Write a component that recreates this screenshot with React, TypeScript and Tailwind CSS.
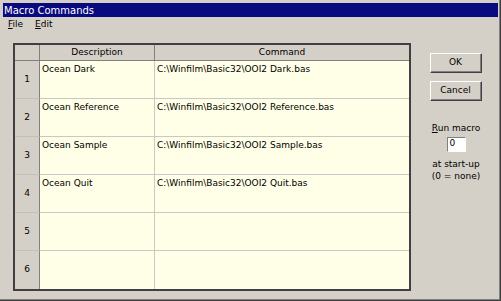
import React from 'react';

const ROWS = [
  { desc: 'Ocean Dark', cmd: 'C:\\Winfilm\\Basic32\\OOI2 Dark.bas' },
  { desc: 'Ocean Reference', cmd: 'C:\\Winfilm\\Basic32\\OOI2 Reference.bas' },
  { desc: 'Ocean Sample', cmd: 'C:\\Winfilm\\Basic32\\OOI2 Sample.bas' },
  { desc: 'Ocean Quit', cmd: 'C:\\Winfilm\\Basic32\\OOI2 Quit.bas' },
  { desc: '', cmd: '' },
  { desc: '', cmd: '' },
];

function Button({ children }: { children: React.ReactNode }) {
  return (
    <div className="border border-t-white border-l-white border-r-[#404040] border-b-[#404040]">
      <div className="flex h-[18px] w-[50px] items-center justify-center border-r border-b border-[#808080] bg-[#d4d0c8]">
        {children}
      </div>
    </div>
  );
}

export default function App() {
  return (
    <div
      className="h-[301px] w-[501px] overflow-hidden border-r border-b border-[#404040] bg-[#d4d0c8] text-[9px] text-black"
      style={{ fontFamily: '"DejaVu Sans", Verdana, sans-serif' }}
    >
      <div className="flex h-full flex-col border-r border-b border-[#808080] pt-[3px] pl-[3px] pr-px">
        {/* Title bar */}
        <div className="flex h-[14px] items-center bg-[#0a0a80] pl-px text-[10px] text-white">
          Macro Commands
        </div>

        {/* Menu bar */}
        <div className="flex h-[15px] items-center gap-[12px] pl-[5px]">
          <span>
            <span className="underline">F</span>ile
          </span>
          <span>
            <span className="underline">E</span>dit
          </span>
        </div>

        <div className="mt-[11px] flex">
          {/* Grid */}
          <div className="ml-[10px] w-[398px] border-2 border-[#404040]">
            <div className="grid grid-cols-[25px_115px_254px]">
              {/* header row */}
              <div className="h-[16px] border-r border-b border-[#808080] bg-[#d4d0c8]" />
              <div className="flex h-[16px] items-center justify-center border-r border-b border-[#808080] bg-[#d4d0c8]">
                Description
              </div>
              <div className="flex h-[16px] items-center justify-center border-b border-[#808080] bg-[#d4d0c8]">
                Command
              </div>

              {ROWS.map((r, i) => (
                <React.Fragment key={i}>
                  <div
                    className={`flex h-[38px] items-center justify-center border-r border-[#808080] bg-[#d4d0c8] ${
                      i < ROWS.length - 1 ? 'border-b border-b-[#c4c0b8]' : ''
                    }`}
                  >
                    {i + 1}
                  </div>
                  <div
                    className={`h-[38px] border-r border-[#c8c8c8] bg-[#ffffe8] pl-[2px] pt-[2px] ${
                      i < ROWS.length - 1 ? 'border-b' : ''
                    }`}
                  >
                    {r.desc}
                  </div>
                  <div
                    className={`h-[38px] border-[#c8c8c8] bg-[#ffffe8] pl-[2px] pt-[2px] ${
                      i < ROWS.length - 1 ? 'border-b' : ''
                    }`}
                  >
                    {r.cmd}
                  </div>
                </React.Fragment>
              ))}
            </div>
          </div>

          {/* Right panel */}
          <div className="ml-[19px] mt-[10px] flex w-[52px] flex-col items-center">
            <Button>OK</Button>
            <div className="mt-[8px]">
              <Button>Cancel</Button>
            </div>
            <div className="mt-[21px] whitespace-nowrap">
              <span className="underline">R</span>un macro
            </div>
            <div className="mt-[1px] flex h-[15px] w-[19px] items-center border border-t-[#808080] border-l-[#808080] border-r-white border-b-white bg-white pl-[2px]">
              0
            </div>
            <div className="mt-[6px] whitespace-nowrap leading-[12px]">at start-up</div>
            <div className="whitespace-nowrap leading-[12px]">(0 = none)</div>
          </div>
        </div>
      </div>
    </div>
  );
}
